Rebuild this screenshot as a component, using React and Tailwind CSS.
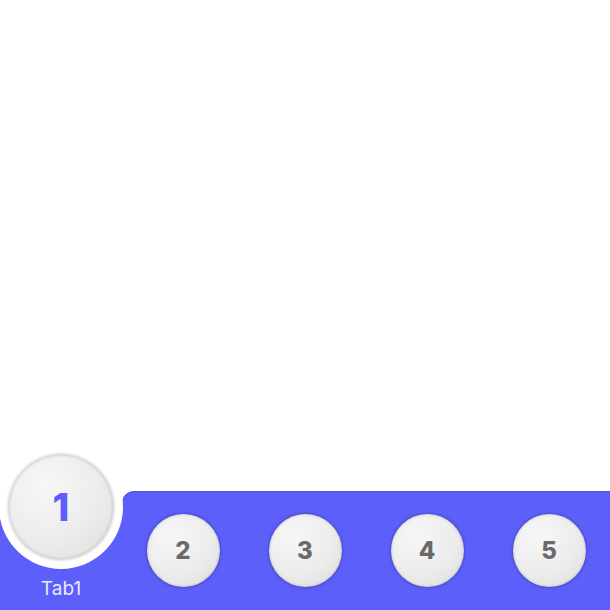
export default function App() {
  const circle =
    "rounded-full bg-[radial-gradient(circle_at_35%_30%,#f7f7f7_0%,#ececec_55%,#dcdcdc_100%)] shadow-[0_0_3px_1px_rgba(0,0,0,0.22),inset_0_0_3px_rgba(0,0,0,0.2)] flex items-center justify-center font-extrabold";
  return (
    <div className="w-[610px] h-[610px] bg-white flex flex-col justify-end overflow-hidden font-['Inter',sans-serif]">
      <div className="relative h-[119px] flex">
        <div className="relative w-[122px] h-full flex flex-col">
          <div className="mt-[16px] flex-1 bg-[#5d5ffb] flex flex-col items-center justify-end pb-[10px]">
            <span className="text-[19px] leading-[23px] text-[#e9e9ff]">Tab1</span>
          </div>
          <div className="absolute left-[-1px] top-[-46px] w-[124px] h-[124px] rounded-full bg-white flex items-center justify-center">
            <div className={`${circle} w-[104px] h-[104px] text-[38px] text-[#5d5ffb]`}>1</div>
          </div>
        </div>
        <div className="flex-1 flex bg-[#5d5ffb] rounded-tl-[12px] shadow-[inset_0_1px_1px_rgba(0,0,0,0.15)]">
          {["2", "3", "4", "5"].map((n) => (
            <div key={n} className="w-[122px] flex items-center justify-center">
              <div className={`${circle} w-[73px] h-[73px] text-[24px] text-[#6a6a6a]`}>{n}</div>
            </div>
          ))}
        </div>
      </div>
    </div>
  );
}
